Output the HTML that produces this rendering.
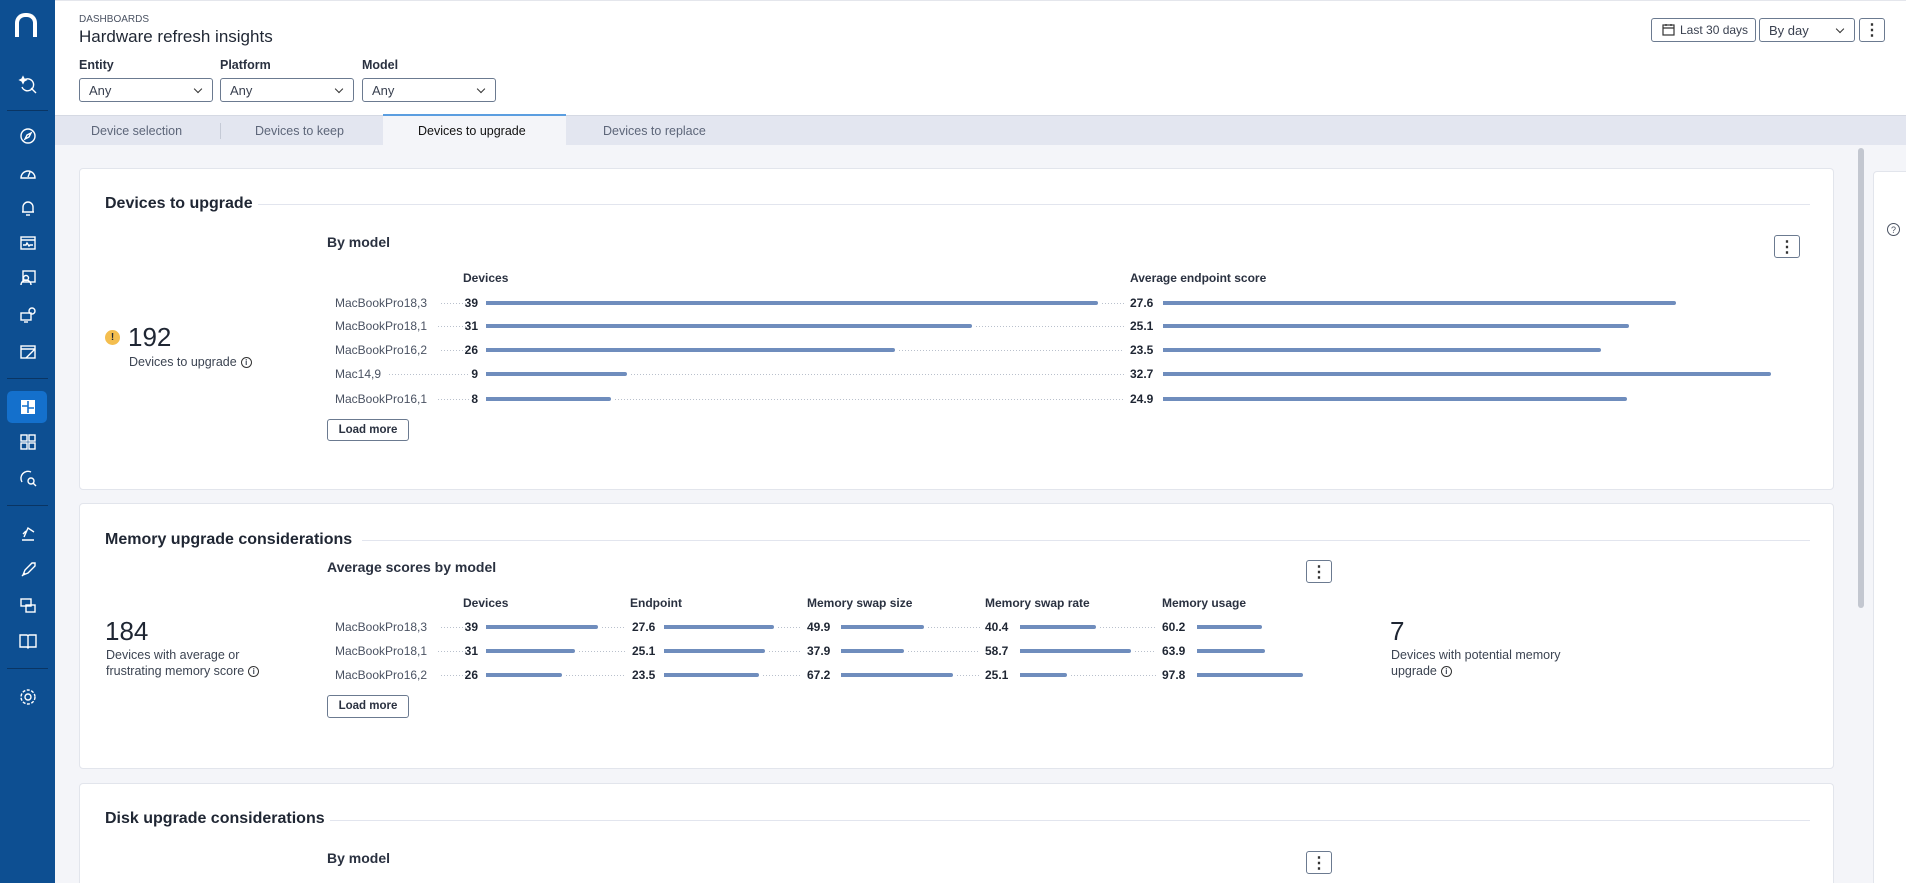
<!DOCTYPE html>
<html><head><meta charset="utf-8"><style>
*{box-sizing:border-box;margin:0;padding:0}
html{width:1906px;height:883px;overflow:hidden}
body{width:1906px;height:883px;overflow:hidden;background:#f4f5f9;font-family:"Liberation Sans",sans-serif;color:#1f2633;position:relative}
.a{position:absolute}
.sb{left:0;top:0;width:55px;height:883px;background:#0d4f92}
.sep{position:absolute;left:7px;width:41px;height:1px;background:#0a3563}
.ic{position:absolute;left:18px;width:20px;height:20px}
.hdr{left:55px;top:0;width:1851px;height:115px;background:#fff;border-top:1px solid #e4e6ec}
.sel{position:absolute;height:24px;border:1px solid #6b7a90;border-radius:3px;background:#fff;font-size:13px;color:#3a4150;padding:4px 9px;white-space:nowrap}
.chev:after{content:"";position:absolute;right:11px;top:7px;width:5px;height:5px;border-right:1.3px solid #333;border-bottom:1.3px solid #333;transform:rotate(45deg)}
.lbl{position:absolute;font-size:12.5px;font-weight:bold;color:#2a3140}
.tabs{left:55px;top:115px;width:1851px;height:30px;background:#e3e6f0;border-top:1px solid #d5d9e3}
.tab{position:absolute;top:8px;font-size:12.5px;color:#5d6679}
.card{position:absolute;left:79px;width:1755px;background:#fff;border:1px solid #e2e5ec;border-radius:4px}
.t{position:absolute;font-size:16px;font-weight:bold;color:#1f2633}
.line{position:absolute;height:1px;background:#e2e5ee}
.st{position:absolute;font-size:14px;font-weight:bold;color:#2a3140}
.ch{position:absolute;font-size:12px;font-weight:bold;color:#2a3140}
.rl{position:absolute;font-size:12px;color:#4a5262}
.n{position:absolute;font-size:12px;font-weight:bold;color:#1f2633;text-align:right}
.bar{position:absolute;height:4px;background:#6f8dbd;border-radius:0 2px 2px 0}
.dot{position:absolute;height:1px;background:repeating-linear-gradient(90deg,#b9c0cc 0 1px,transparent 1px 3px)}
.btn{position:absolute;border:1px solid #6b7a90;border-radius:3px;background:#fff;font-size:11.5px;font-weight:bold;color:#2a3140;text-align:center}
.keb{position:absolute;width:26px;height:23px;border:1px solid #6b7a90;border-radius:3px;background:#fff}
.keb:before{content:"⋮";position:absolute;left:0;right:0;top:1px;text-align:center;font-size:16px;font-weight:bold;color:#333}
.kpi{position:absolute;font-size:26px;color:#1f2633}
.kt{position:absolute;font-size:12.5px;color:#3c4452;line-height:16px}
.info{display:inline-block;width:11px;height:11px;border:1px solid #333;border-radius:50%;font-size:8px;text-align:center;line-height:10px;vertical-align:middle;margin-left:4px;font-weight:bold}
</style></head><body>
<div class="a sb">
<div class="a" style="left:15px;top:13px;width:22px;height:24px;border:4.5px solid #fff;border-bottom:none;border-radius:10px 10px 0 0"></div>
<svg class="ic" style="top:75px" viewBox="0 0 20 20" fill="none" stroke="#fff" stroke-width="1.4"><path d="M4 12a6 6 0 1 0 2-7"/><path d="M13 13l5 5"/><path d="M5 2l1 2 2 1-2 1-1 2-1-2-2-1 2-1z" fill="#fff"/></svg>
<div class="sep" style="top:110px"></div>
<svg class="ic" style="top:126px" viewBox="0 0 20 20" fill="none" stroke="#fff" stroke-width="1.4"><circle cx="10" cy="10" r="7"/><path d="M13 7l-2 4-4 2 2-4z"/></svg>
<svg class="ic" style="top:163px" viewBox="0 0 20 20" fill="none" stroke="#fff" stroke-width="1.4"><path d="M3 15a7 7 0 1 1 14 0z"/><path d="M10 14l2-5"/></svg>
<svg class="ic" style="top:198px" viewBox="0 0 20 20" fill="none" stroke="#fff" stroke-width="1.4"><path d="M5 14V9a5 5 0 0 1 10 0v5H4h12"/><path d="M8 17h4"/></svg>
<svg class="ic" style="top:233px" viewBox="0 0 20 20" fill="none" stroke="#fff" stroke-width="1.4"><rect x="3" y="4" width="14" height="12"/><path d="M3 7h14M5 12h3l1-2 2 3 1-1h3"/></svg>
<svg class="ic" style="top:268px" viewBox="0 0 20 20" fill="none" stroke="#fff" stroke-width="1.4"><rect x="5" y="3" width="12" height="11"/><circle cx="8" cy="10" r="2.5"/><path d="M3 17a5 5 0 0 1 10 0"/></svg>
<svg class="ic" style="top:305px" viewBox="0 0 20 20" fill="none" stroke="#fff" stroke-width="1.4"><rect x="3" y="8" width="10" height="7"/><path d="M6 17h4"/><circle cx="14" cy="6" r="3"/></svg>
<svg class="ic" style="top:342px" viewBox="0 0 20 20" fill="none" stroke="#fff" stroke-width="1.4"><rect x="3" y="4" width="14" height="12"/><path d="M3 7h14M8 16l9-9"/></svg>
<div class="sep" style="top:378px"></div>
<div class="a" style="left:7px;top:391px;width:40px;height:32px;background:#1470cc;border-radius:5px"></div>
<svg class="ic" style="top:397px" viewBox="0 0 20 20"><rect x="3" y="3" width="14" height="14" fill="#fff"/><path d="M10 4v12M4 9h6M10 11h6" stroke="#1470cc" stroke-width="1.6"/></svg>
<svg class="ic" style="top:432px" viewBox="0 0 20 20" fill="none" stroke="#fff" stroke-width="1.4"><rect x="3" y="3" width="6" height="6"/><rect x="11" y="3" width="6" height="6"/><rect x="3" y="11" width="6" height="6"/><rect x="11" y="11" width="6" height="6"/></svg>
<svg class="ic" style="top:468px" viewBox="0 0 20 20" fill="none" stroke="#fff" stroke-width="1.4"><path d="M4 14a7 7 0 0 1 9-10"/><circle cx="13" cy="13" r="3"/><path d="M15 15l3 3"/></svg>
<div class="sep" style="top:505px"></div>
<svg class="ic" style="top:523px" viewBox="0 0 20 20" fill="none" stroke="#fff" stroke-width="1.4"><path d="M4 17h12M6 14l4-9 6 4M8 8l-3 3"/></svg>
<svg class="ic" style="top:560px" viewBox="0 0 20 20" fill="none" stroke="#fff" stroke-width="1.4"><path d="M5 15l2-5 7-7 3 0 0 3-7 7z M4 16l3-3"/></svg>
<svg class="ic" style="top:596px" viewBox="0 0 20 20" fill="none" stroke="#fff" stroke-width="1.4"><rect x="3" y="3" width="10" height="7"/><rect x="8" y="9" width="9" height="7"/></svg>
<svg class="ic" style="top:631px" viewBox="0 0 20 20" fill="none" stroke="#fff" stroke-width="1.4"><path d="M2 4h7l1 1 1-1h7v12h-7l-1 1-1-1H2zM10 5v11"/></svg>
<div class="sep" style="top:668px"></div>
<svg class="ic" style="top:687px" viewBox="0 0 20 20" fill="none" stroke="#fff" stroke-width="1.4"><circle cx="10" cy="10" r="3"/><circle cx="10" cy="10" r="7" stroke-dasharray="3 1.5"/></svg>
</div>

<div class="a hdr">
<div class="a" style="left:24px;top:13px;font-size:10px;color:#4a5262">DASHBOARDS</div>
<div class="a" style="left:24px;top:26px;font-size:17px;color:#1f2633">Hardware refresh insights</div>
<div class="lbl" style="left:24px;top:57px">Entity</div>
<div class="lbl" style="left:165px;top:57px">Platform</div>
<div class="lbl" style="left:307px;top:57px">Model</div>
<div class="sel chev" style="left:24px;top:77px;width:134px">Any</div>
<div class="sel chev" style="left:165px;top:77px;width:134px">Any</div>
<div class="sel chev" style="left:307px;top:77px;width:134px">Any</div>
<div class="sel" style="left:1596px;top:17px;width:105px;padding-left:28px;font-size:12px">Last 30 days</div>
<svg class="a" style="left:1607px;top:22px" width="13" height="13" viewBox="0 0 13 13" fill="none" stroke="#333" stroke-width="1.2"><rect x="1" y="2" width="11" height="10"/><path d="M1 5h11M4 1v2M9 1v2"/></svg>
<div class="sel chev" style="left:1704px;top:17px;width:96px">By day</div>
<div class="keb" style="left:1804px;top:17px;width:26px;height:24px"></div>
</div>

<div class="a tabs">
<div class="tab" style="left:36px">Device selection</div>
<div class="a" style="left:165px;top:7px;width:1px;height:16px;background:#c5cad6"></div>
<div class="tab" style="left:200px">Devices to keep</div>
<div class="a" style="left:328px;top:-2px;width:183px;height:31px;background:#f4f5f9;border-top:2px solid #5b9ee0"></div>
<div class="tab" style="left:363px;color:#111">Devices to upgrade</div>
<div class="tab" style="left:548px">Devices to replace</div>
</div>

<div class="a" style="left:1858px;top:148px;width:6px;height:460px;background:#c3c7d0;border-radius:3px"></div>
<div class="a" style="left:1873px;top:171px;width:40px;height:720px;background:#fff;border:1px solid #e2e5ec;border-radius:4px"></div>
<div class="a" style="left:1887px;top:223px;width:13px;height:13px;border:1px solid #4a5262;border-radius:50%;font-size:9px;text-align:center;line-height:12px;color:#4a5262">?</div>

<!-- Card 1 -->
<div class="card" style="top:168px;height:322px"></div>
<div class="t" style="left:105px;top:195px">Devices to upgrade</div>
<div class="line" style="left:258px;top:204px;width:1552px"></div>
<div class="st" style="left:327px;top:234px">By model</div>
<div class="keb" style="left:1774px;top:235px"></div>
<div class="a" style="left:105px;top:330px;width:15px;height:15px;border-radius:50%;background:#f4be4f;font-size:10px;font-weight:bold;text-align:center;line-height:15px">!</div>
<div class="kpi" style="left:128px;top:322px">192</div>
<div class="kt" style="left:129px;top:354px">Devices to upgrade<span class="info">i</span></div>
<div class="ch" style="left:463px;top:271px">Devices</div>
<div class="ch" style="left:1130px;top:271px">Average endpoint score</div>

<div class="rl" style="left:335px;top:296px">MacBookPro18,3</div><div class="dot" style="left:441px;top:303px;width:28px"></div><div class="n" style="left:450px;top:296px;width:28px">39</div><div class="bar" style="left:486px;top:301px;width:612px"></div><div class="dot" style="left:1102px;top:303px;width:22px"></div><div class="n" style="left:1130px;top:296px;text-align:left">27.6</div><div class="bar" style="left:1163px;top:301px;width:513px"></div>
<div class="rl" style="left:335px;top:319px">MacBookPro18,1</div><div class="dot" style="left:438px;top:326px;width:31px"></div><div class="n" style="left:450px;top:319px;width:28px">31</div><div class="bar" style="left:486px;top:324px;width:486px"></div><div class="dot" style="left:976px;top:326px;width:148px"></div><div class="n" style="left:1130px;top:319px;text-align:left">25.1</div><div class="bar" style="left:1163px;top:324px;width:466px"></div>
<div class="rl" style="left:335px;top:343px">MacBookPro16,2</div><div class="dot" style="left:441px;top:350px;width:28px"></div><div class="n" style="left:450px;top:343px;width:28px">26</div><div class="bar" style="left:486px;top:348px;width:409px"></div><div class="dot" style="left:899px;top:350px;width:225px"></div><div class="n" style="left:1130px;top:343px;text-align:left">23.5</div><div class="bar" style="left:1163px;top:348px;width:438px"></div>
<div class="rl" style="left:335px;top:367px">Mac14,9</div><div class="dot" style="left:389px;top:374px;width:80px"></div><div class="n" style="left:450px;top:367px;width:28px">9</div><div class="bar" style="left:486px;top:372px;width:141px"></div><div class="dot" style="left:631px;top:374px;width:493px"></div><div class="n" style="left:1130px;top:367px;text-align:left">32.7</div><div class="bar" style="left:1163px;top:372px;width:608px"></div>
<div class="rl" style="left:335px;top:392px">MacBookPro16,1</div><div class="dot" style="left:438px;top:399px;width:31px"></div><div class="n" style="left:450px;top:392px;width:28px">8</div><div class="bar" style="left:486px;top:397px;width:125px"></div><div class="dot" style="left:615px;top:399px;width:509px"></div><div class="n" style="left:1130px;top:392px;text-align:left">24.9</div><div class="bar" style="left:1163px;top:397px;width:464px"></div>
<div class="btn" style="left:327px;top:419px;width:82px;height:22px;line-height:20px">Load more</div>

<!-- Card 2 -->
<div class="card" style="top:503px;height:266px"></div>
<div class="t" style="left:105px;top:531px">Memory upgrade considerations</div>
<div class="line" style="left:362px;top:540px;width:1448px"></div>
<div class="st" style="left:327px;top:559px">Average scores by model</div>
<div class="keb" style="left:1306px;top:560px"></div>
<div class="kpi" style="left:105px;top:616px">184</div>
<div class="kt" style="left:106px;top:647px">Devices with average or<br>frustrating memory score<span class="info">i</span></div>
<div class="kpi" style="left:1390px;top:616px">7</div>
<div class="kt" style="left:1391px;top:647px">Devices with potential memory<br>upgrade<span class="info">i</span></div>
<div class="ch" style="left:463px;top:596px">Devices</div>
<div class="ch" style="left:630px;top:596px">Endpoint</div>
<div class="ch" style="left:807px;top:596px">Memory swap size</div>
<div class="ch" style="left:985px;top:596px">Memory swap rate</div>
<div class="ch" style="left:1162px;top:596px">Memory usage</div>

<div class="rl" style="left:335px;top:620px">MacBookPro18,3</div><div class="dot" style="left:441px;top:627px;width:28px"></div><div class="n" style="left:450px;top:620px;width:28px">39</div><div class="bar" style="left:486px;top:625px;width:112px"></div><div class="dot" style="left:602px;top:627px;width:24px"></div>
<div class="n" style="left:632px;top:620px">27.6</div><div class="bar" style="left:664px;top:625px;width:110px"></div><div class="dot" style="left:778px;top:627px;width:24px"></div>
<div class="n" style="left:807px;top:620px">49.9</div><div class="bar" style="left:841px;top:625px;width:83px"></div><div class="dot" style="left:928px;top:627px;width:52px"></div>
<div class="n" style="left:985px;top:620px">40.4</div><div class="bar" style="left:1020px;top:625px;width:76px"></div><div class="dot" style="left:1100px;top:627px;width:56px"></div>
<div class="n" style="left:1162px;top:620px">60.2</div><div class="bar" style="left:1197px;top:625px;width:65px"></div>

<div class="rl" style="left:335px;top:644px">MacBookPro18,1</div><div class="dot" style="left:438px;top:651px;width:31px"></div><div class="n" style="left:450px;top:644px;width:28px">31</div><div class="bar" style="left:486px;top:649px;width:89px"></div><div class="dot" style="left:579px;top:651px;width:47px"></div>
<div class="n" style="left:632px;top:644px">25.1</div><div class="bar" style="left:664px;top:649px;width:101px"></div><div class="dot" style="left:769px;top:651px;width:33px"></div>
<div class="n" style="left:807px;top:644px">37.9</div><div class="bar" style="left:841px;top:649px;width:63px"></div><div class="dot" style="left:908px;top:651px;width:72px"></div>
<div class="n" style="left:985px;top:644px">58.7</div><div class="bar" style="left:1020px;top:649px;width:111px"></div><div class="dot" style="left:1135px;top:651px;width:21px"></div>
<div class="n" style="left:1162px;top:644px">63.9</div><div class="bar" style="left:1197px;top:649px;width:68px"></div>

<div class="rl" style="left:335px;top:668px">MacBookPro16,2</div><div class="dot" style="left:441px;top:675px;width:28px"></div><div class="n" style="left:450px;top:668px;width:28px">26</div><div class="bar" style="left:486px;top:673px;width:76px"></div><div class="dot" style="left:566px;top:675px;width:60px"></div>
<div class="n" style="left:632px;top:668px">23.5</div><div class="bar" style="left:664px;top:673px;width:95px"></div><div class="dot" style="left:763px;top:675px;width:39px"></div>
<div class="n" style="left:807px;top:668px">67.2</div><div class="bar" style="left:841px;top:673px;width:112px"></div><div class="dot" style="left:957px;top:675px;width:23px"></div>
<div class="n" style="left:985px;top:668px">25.1</div><div class="bar" style="left:1020px;top:673px;width:47px"></div><div class="dot" style="left:1071px;top:675px;width:85px"></div>
<div class="n" style="left:1162px;top:668px">97.8</div><div class="bar" style="left:1197px;top:673px;width:106px"></div>
<div class="btn" style="left:327px;top:695px;width:82px;height:23px;line-height:21px">Load more</div>

<!-- Card 3 -->
<div class="card" style="top:783px;height:100px;border-bottom:none;border-radius:4px 4px 0 0"></div>
<div class="t" style="left:105px;top:810px">Disk upgrade considerations</div>
<div class="line" style="left:330px;top:820px;width:1480px"></div>
<div class="st" style="left:327px;top:850px">By model</div>
<div class="keb" style="left:1306px;top:851px"></div>
</body></html>
